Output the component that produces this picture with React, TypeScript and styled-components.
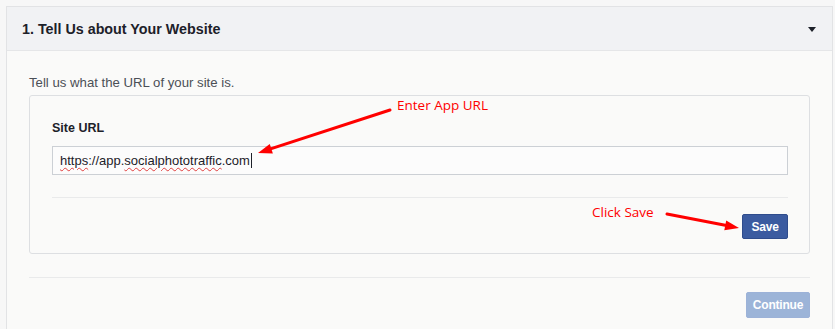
import React from 'react';
import styled, { createGlobalStyle } from 'styled-components';

const GlobalStyle = createGlobalStyle`
  html, body {
    margin: 0;
    padding: 0;
    background: #f7f7f7;
    font-family: "Liberation Sans", Arial, Helvetica, sans-serif;
  }
`;

const Page = styled.div`
  position: relative;
  width: 835px;
  height: 329px;
  overflow: hidden;
  padding: 6px 0 0 6px;
  box-sizing: border-box;
`;

const Panel = styled.section`
  width: 827px;
  height: 340px;
  box-sizing: border-box;
  border: 1px solid #e2e3e5;
  background: #fafaf9;
`;

const Header = styled.div`
  height: 44px;
  box-sizing: border-box;
  display: flex;
  align-items: center;
  justify-content: space-between;
  padding: 0 16px 0 15px;
  background: #f1f2f4;
  border-bottom: 1px solid #e5e6e8;
`;

const Title = styled.h2`
  margin: 0;
  font-size: 14.3px;
  font-weight: bold;
  color: #1d2129;
`;

const Caret = styled.span`
  width: 0;
  height: 0;
  border-left: 4px solid transparent;
  border-right: 4px solid transparent;
  border-top: 5px solid #1d2129;
  margin-top: 2px;
`;

const Body = styled.div`
  padding: 24px 22px 0 22px;
`;

const Intro = styled.p`
  margin: 0 0 4px 0;
  font-size: 13.2px;
  line-height: 16px;
  color: #4b4f56;
`;

const Box = styled.div`
  width: 781px;
  box-sizing: border-box;
  border: 1px solid #dddfe2;
  border-radius: 3px;
  padding: 25px 21px 14px 22px;
`;

const Label = styled.div`
  font-size: 12.5px;
  line-height: 14px;
  font-weight: bold;
  color: #1d2129;
  margin-bottom: 11px;
`;

const Field = styled.div`
  height: 29px;
  box-sizing: border-box;
  border: 1px solid #ccd0d5;
  background: #fcfcfc;
  display: flex;
  align-items: center;
  padding-left: 7px;
  font-size: 13px;
  color: #1d2129;
`;

const Misspelled = styled.span`
  text-decoration: underline wavy #e04040;
  text-decoration-thickness: 1px;
  text-underline-offset: 2px;
`;

const Cursor = styled.span`
  display: inline-block;
  width: 1px;
  height: 15px;
  background: #1d2129;
  margin-left: 1px;
`;

const Divider = styled.hr<{ $top: number }>`
  border: none;
  border-top: 1px solid #e9eaeb;
  margin: ${({ $top }) => $top}px 0 0 0;
`;

const Actions = styled.div<{ $top: number }>`
  display: flex;
  justify-content: flex-end;
  margin-top: ${({ $top }) => $top}px;
`;

const Button = styled.button<{ $disabled?: boolean }>`
  width: ${({ $disabled }) => ($disabled ? 64 : 46)}px;
  height: ${({ $disabled }) => ($disabled ? 26 : 25)}px;
  padding: 0;
  border-radius: 2px;
  border: 1px solid ${({ $disabled }) => ($disabled ? '#9cb2d8' : '#2f4c8c')};
  background: ${({ $disabled }) => ($disabled ? '#9cb4d8' : '#3b5ba0')};
  color: #fff;
  font-family: "Liberation Sans", Arial, sans-serif;
  font-size: 12px;
  font-weight: bold;
  letter-spacing: -0.2px;
`;

const Note = styled.span<{ $x: number; $y: number }>`
  position: absolute;
  left: ${({ $x }) => $x}px;
  top: ${({ $y }) => $y}px;
  font-family: "Open Sans", "DejaVu Sans", sans-serif;
  font-size: 13.5px;
  line-height: 16px;
  color: #ff0000;
  white-space: nowrap;
`;

const Overlay = styled.svg`
  position: absolute;
  left: 0;
  top: 0;
  pointer-events: none;
`;

const Arrow = ({ x1, y1, x2, y2 }: { x1: number; y1: number; x2: number; y2: number }) => {
  const dx = x2 - x1;
  const dy = y2 - y1;
  const len = Math.hypot(dx, dy);
  const ux = dx / len;
  const uy = dy / len;
  const head = 14;
  const half = 5;
  const bx = x2 - ux * head;
  const by = y2 - uy * head;
  const points = `${x2},${y2} ${bx - uy * half},${by + ux * half} ${bx + uy * half},${by - ux * half}`;
  return (
    <g>
      <line x1={x1} y1={y1} x2={bx} y2={by} stroke="#ff0000" strokeWidth={3} strokeLinecap="round" />
      <polygon points={points} fill="#ff0000" />
    </g>
  );
};

export default function App() {
  return (
    <>
      <GlobalStyle />
      <Page>
        <Panel>
          <Header>
            <Title>1. Tell Us about Your Website</Title>
            <Caret />
          </Header>
          <Body>
            <Intro>Tell us what the URL of your site is.</Intro>
            <Box>
              <Label>Site URL</Label>
              <Field>
                <Misspelled>https</Misspelled>://app.<Misspelled>socialphototraffic</Misspelled>.com
                <Cursor />
              </Field>
              <Divider $top={22} />
              <Actions $top={16}>
                <Button>Save</Button>
              </Actions>
            </Box>
            <Divider $top={23} />
            <Actions $top={14}>
              <Button $disabled>Continue</Button>
            </Actions>
          </Body>
        </Panel>
        <Note $x={397} $y={97}>Enter App URL</Note>
        <Note $x={592} $y={204}>Click Save</Note>
        <Overlay width={835} height={329}>
          <Arrow x1={390} y1={110} x2={258} y2={153} />
          <Arrow x1={667} y1={214} x2={739} y2={228} />
        </Overlay>
      </Page>
    </>
  );
}
